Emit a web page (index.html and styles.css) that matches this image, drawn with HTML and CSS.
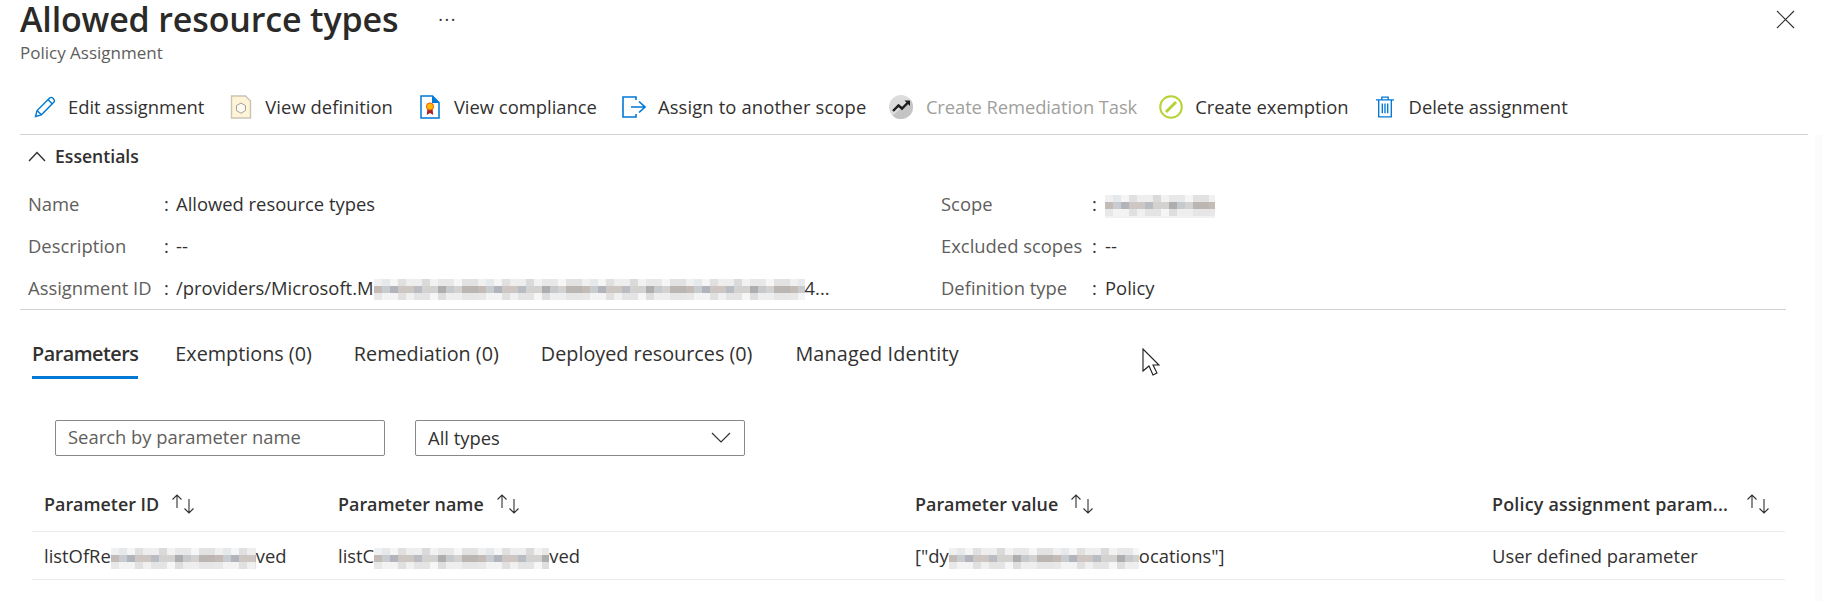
FILE: index.html
```html
<!DOCTYPE html>
<html lang="en">
<head>
<meta charset="utf-8">
<title>Allowed resource types</title>
<link rel="stylesheet" href="styles.css">
</head>
<body>
<div class="page">
  <header class="head">
    <div class="titles">
      <div class="title-row">
        <h1>Allowed resource types</h1>
        <span class="more">···</span>
      </div>
      <p class="subtitle">Policy Assignment</p>
    </div>
    <svg class="close" viewBox="0 0 19 19"><path d="M1 1l17 17M18 1L1 18"/></svg>
  </header>

  <nav class="toolbar">
    <a class="tool t-edit">
      <svg class="ico" viewBox="0 0 22 22" fill="none" stroke="#0078d4" stroke-width="1.4"><path d="M1.500 20.500l1.600-6L15.600 2a2.100 2.100 0 0 1 3 0l1.200 1.200a2.100 2.100 0 0 1 0 3L7.400 18.800z"/><path d="M3.100 14.500l4.300 4.300M14 3.600l4.300 4.300"/></svg>
      <span>Edit assignment</span>
    </a>
    <a class="tool t-def">
      <svg class="ico" viewBox="0 0 22 24"><path d="M1.500 1h14l5 5v17h-19z" fill="#fff4d6" stroke="#c9c4b4" stroke-width="1.4"/><path d="M11 8l4.500 2.600v5L11 18.200l-4.500-2.600v-5z" fill="#fffaf0" stroke="#a19f9d" stroke-width="1"/></svg>
      <span>View definition</span>
    </a>
    <a class="tool t-comp">
      <svg class="ico" viewBox="0 0 20 24"><path d="M1 1h11.500L19 7.500V23H1z" fill="#fff" stroke="#0078d4" stroke-width="1.500"/><path d="M12 1l7 7h-7z" fill="#0078d4"/><path d="M7.500 13l-.7 7 3.200-2 3.200 2-.7-7z" fill="#a4262c"/><circle cx="10" cy="11.500" r="3.600" fill="#ffb900" stroke="#e8590c" stroke-width="1"/></svg>
      <span>View compliance</span>
    </a>
    <a class="tool t-assign">
      <svg class="ico" viewBox="0 0 24 24" fill="none" stroke="#0078d4" stroke-width="1.600"><path d="M14 5V2H1v20h13v-3"/><path d="M9 12h14M17 6.500l6 5.500-6 5.500"/></svg>
      <span>Assign to another scope</span>
    </a>
    <a class="tool t-rem disabled">
      <svg class="ico" viewBox="0 0 24 24"><circle cx="12" cy="12" r="12" fill="#dcdcdc"/><path d="M3.500 20.500A12 12 0 0 0 24 12c0-2.500-.8-4.800-2-6.700z" fill="#c4c4c4"/><path d="M4 16l5.500-5.500 3.500 3 6-6" fill="none" stroke="#1c1c1c" stroke-width="2.400"/><path d="M15.500 5.500H21v5.500z" fill="#1c1c1c"/></svg>
      <span>Create Remediation Task</span>
    </a>
    <a class="tool t-exem">
      <svg class="ico" viewBox="0 0 24 24" fill="none" stroke="#b5d334"><circle cx="12" cy="12" r="10.800" stroke-width="2"/><path d="M7 17L17 7" stroke-width="3"/></svg>
      <span>Create exemption</span>
    </a>
    <a class="tool t-del">
      <svg class="ico" viewBox="0 0 20 24" fill="none" stroke="#0078d4" stroke-width="1.500"><path d="M0 4h20M6.500 4V1h7v3M3 4v19h14V4M7 8v11M10 8v11M13 8v11"/></svg>
      <span>Delete assignment</span>
    </a>
  </nav>

  <section class="essentials">
    <div class="ess-head">
      <svg class="ess-chev" viewBox="0 0 18 11"><path d="M1 10l8-8.500 8 8.500"/></svg>
      <span>Essentials</span>
    </div>
    <div class="ess-grid">
      <div class="ess-col col-left">
        <div class="ess-row"><span class="lbl">Name</span><span class="colon">:</span><span class="val">Allowed resource types</span></div>
        <div class="ess-row"><span class="lbl">Description</span><span class="colon">:</span><span class="val">--</span></div>
        <div class="ess-row"><span class="lbl">Assignment ID</span><span class="colon">:</span><span class="val">/providers/Microsoft.M<span class="mosaic m-id"></span>4...</span></div>
      </div>
      <div class="ess-col col-right">
        <div class="ess-row"><span class="lbl">Scope</span><span class="colon">:</span><span class="val"><span class="mosaic m-scope"></span></span></div>
        <div class="ess-row"><span class="lbl">Excluded scopes</span><span class="colon">:</span><span class="val">--</span></div>
        <div class="ess-row"><span class="lbl">Definition type</span><span class="colon">:</span><span class="val">Policy</span></div>
      </div>
    </div>
  </section>

  <div class="tabs">
    <a class="tab active">Parameters</a>
    <a class="tab">Exemptions (0)</a>
    <a class="tab">Remediation (0)</a>
    <a class="tab">Deployed resources (0)</a>
    <a class="tab">Managed Identity</a>
  </div>

  <div class="filters">
    <div class="field search">Search by parameter name</div>
    <div class="field select"><span>All types</span><svg class="sel-chev" viewBox="0 0 20 11"><path d="M1 1l9 9 9-9"/></svg></div>
  </div>

  <div class="table">
    <div class="cell th">Parameter ID<svg class="sort" viewBox="0 0 24 20"><path d="M6 14V1M1.500 5.500L6 1l4.500 4.500M18 5v14M13.500 14.500L18 19l4.500-4.500"/></svg></div>
    <div class="cell th">Parameter name<svg class="sort" viewBox="0 0 24 20"><path d="M6 14V1M1.500 5.500L6 1l4.500 4.500M18 5v14M13.500 14.500L18 19l4.500-4.500"/></svg></div>
    <div class="cell th">Parameter value<svg class="sort" viewBox="0 0 24 20"><path d="M6 14V1M1.500 5.500L6 1l4.500 4.500M18 5v14M13.500 14.500L18 19l4.500-4.500"/></svg></div>
    <div class="cell th th-long">Policy assignment param...<svg class="sort sort-wide" viewBox="0 0 24 20"><path d="M6 14V1M1.500 5.500L6 1l4.500 4.500M18 5v14M13.500 14.500L18 19l4.500-4.500"/></svg></div>
    <div class="cell td">listOfRe<span class="mosaic m-r1"></span>ved</div>
    <div class="cell td">listC<span class="mosaic m-r2"></span>ved</div>
    <div class="cell td">["dy<span class="mosaic m-r3"></span>ocations"]</div>
    <div class="cell td">User defined parameter</div>
  </div>

  <svg class="cursor" viewBox="0 0 18 28"><path d="M1 1v22l6-5 4 9 4-2-4-8h6z"/></svg>
  <div class="track"></div>
</div>
</body>
</html>
```

FILE: styles.css
```css
* { box-sizing: border-box; }
html, body { margin: 0; padding: 0; background: #fff; }
body {
  font-family: "Open Sans", "Noto Sans", "Liberation Sans", sans-serif;
  font-size: 18.4px;
  color: #323130;
  overflow: hidden;
}
.page { position: relative; width: 1822px; height: 601px; overflow: hidden; }

/* header */
.head { display: flex; justify-content: space-between; align-items: flex-start; height: 79px; padding: 0 27px 0 20px; }
.title-row { display: flex; align-items: center; height: 38px; }
h1 { margin: 0; font-size: 34px; line-height: 38px; font-weight: 600; letter-spacing: -0.15px; color: #2b2a29; white-space: nowrap; }
.more { margin-left: 40px; font-size: 18px; line-height: 38px; letter-spacing: 1.5px; color: #323130; }
.subtitle { margin: 3px 0 0; font-size: 17px; line-height: 24px; color: #605e5c; }
.close { width: 19px; height: 19px; margin-top: 10px; fill: none; stroke: #323130; stroke-width: 1.1; }

/* toolbar */
.toolbar { display: flex; align-items: center; height: 56px; margin: 0 14px 0 20px; border-bottom: 1px solid #d2d2d2; }
.tool { display: flex; align-items: center; white-space: nowrap; }
.tool .ico { display: block; flex: none; }
.t-edit { margin-left: 14px; }
.t-edit .ico { width: 22px; height: 22px; margin-right: 12px; }
.t-def { margin-left: 26px; letter-spacing: 0.05px; }
.t-def .ico { width: 22px; height: 24px; margin-right: 13px; }
.t-comp { margin-left: 27px; }
.t-comp .ico { width: 20px; height: 24px; margin-right: 14px; }
.t-assign { margin-left: 25px; letter-spacing: 0.13px; }
.t-assign .ico { width: 24px; height: 24px; margin-right: 12px; }
.t-rem { margin-left: 22.5px; letter-spacing: -0.1px; }
.t-rem .ico { width: 24px; height: 24px; margin-right: 13px; }
.t-exem { margin-left: 22px; }
.t-exem .ico { width: 24px; height: 24px; margin-right: 12px; }
.t-del { margin-left: 27px; }
.t-del .ico { width: 18px; height: 24px; margin-right: 15px; }
.disabled { color: #a19f9d; }

/* essentials */
.essentials { margin: 0 36px 0 20px; height: 175px; border-bottom: 1px solid #d2d2d2; }
.ess-head { display: flex; align-items: center; height: 42px; margin-bottom: 6px; font-weight: 600; font-size: 17.6px; }
.ess-chev { width: 18px; height: 11px; margin: 0 9px 0 8px; fill: none; stroke: #323130; stroke-width: 1.4; }
.ess-grid { display: flex; height: 126px; }
.ess-col { display: flex; flex-direction: column; }
.col-left { width: 921px; padding-left: 8px; }
.col-right { flex: 1; }
.ess-row { display: flex; align-items: center; height: 41.670px; white-space: nowrap; }
.lbl { color: #605e5c; }
.col-left .lbl { width: 136px; }
.col-right .lbl { width: 151px; }
.colon { width: 12px; }
.col-right .colon { width: 13px; }
.val { color: #323130; }

/* mosaics standing in for redacted text */
.mosaic {
  display: inline-block;
  height: 21px;
  margin: -6px 0;
  vertical-align: middle;
  background-color: #f1f1f1;
  background-image:
    linear-gradient(90deg, #f0f0f0 0 8px, #e6e9eb 8px 16px, #f5f5f5 16px 24px, #e0e0e0 24px 32px, #eeeeee 32px 48px, #dadada 48px 56px, #f2f2f2 56px 64px, #e8e8e8 64px 80px, #f6f6f6 80px 88px, #e2e2e2 88px 104px),
    linear-gradient(90deg, #c4bab6 0 8px, #c8ccd0 8px 16px, #b2b4bc 16px 24px, #cdc6c2 24px 40px, #b9bdc3 40px 48px, #d4d2d0 48px 64px, #aeaeae 64px 72px, #c6cacc 72px 80px, #d2d2d2 80px 88px, #bcb6b2 88px 104px),
    linear-gradient(90deg, #e8e8e8 0 8px, #f3f3f3 8px 24px, #e0e0e0 24px 32px, #f0f0f0 32px 40px, #e4e4e4 40px 56px, #f6f6f6 56px 64px, #dedede 64px 72px, #eeeeee 72px 88px, #e6e6e6 88px 104px);
  background-size: 104px 7px, 104px 7px, 104px 7px;
  background-position: 0 0, 0 7px, 0 14px;
  background-repeat: repeat-x;
}
.m-id { width: 431px; }
.m-scope { width: 110px; height: 23px; }
.m-r1 { width: 145px; }
.m-r2 { width: 175px; }
.m-r3 { width: 190px; }

/* tabs */
.tabs { display: flex; margin: 31px 0 0 32px; }
.tab { display: block; height: 38px; padding: 0 0 11px; font-size: 19.8px; line-height: 26px; margin-right: 42px; border-bottom: 3px solid transparent; white-space: nowrap; }
.tab.active { font-weight: 600; letter-spacing: -0.5px; border-bottom-color: #0078d4; margin-right: 37px; }
.tab:last-child { margin-left: 1px; letter-spacing: 0.15px; }

/* filters */
.filters { display: flex; margin: 41px 0 0 55px; }
.field { display: flex; align-items: center; height: 36px; border: 1px solid #8a8886; border-radius: 2px; padding: 0 12px; }
.search { width: 330px; padding-bottom: 3px; color: #605e5c; }
.select { width: 330px; margin-left: 30px; justify-content: space-between; padding-right: 13px; padding-bottom: 1px; }
.sel-chev { width: 20px; height: 11px; fill: none; stroke: #323130; stroke-width: 1.2; }

/* table */
.table {
  display: grid;
  grid-template-columns: 294px 577px 577px 305px;
  grid-template-rows: 52px 48px;
  width: 1753px;
  margin: 24px 0 0 32px;
}
.cell { display: flex; align-items: center; padding-left: 12px; border-bottom: 1px solid #edebe9; white-space: nowrap; }
.th { font-weight: 600; font-size: 17.9px; padding-bottom: 3px; color: #323130; }
.th-long { letter-spacing: 0.2px; }
.td { display: block; line-height: 47px; }
.sort { width: 24px; height: 20px; margin-left: 12px; fill: none; stroke: #323130; stroke-width: 1.1; }
.sort-wide { margin-left: 18px; }

/* overlays */
.cursor { position: absolute; left: 1142px; top: 348px; width: 18px; height: 28px; fill: #fff; stroke: #1b1b1b; stroke-width: 1.1; }
.track { position: absolute; right: 0; top: 135px; bottom: 0; width: 7px; background: #fbfbfb; }
```
